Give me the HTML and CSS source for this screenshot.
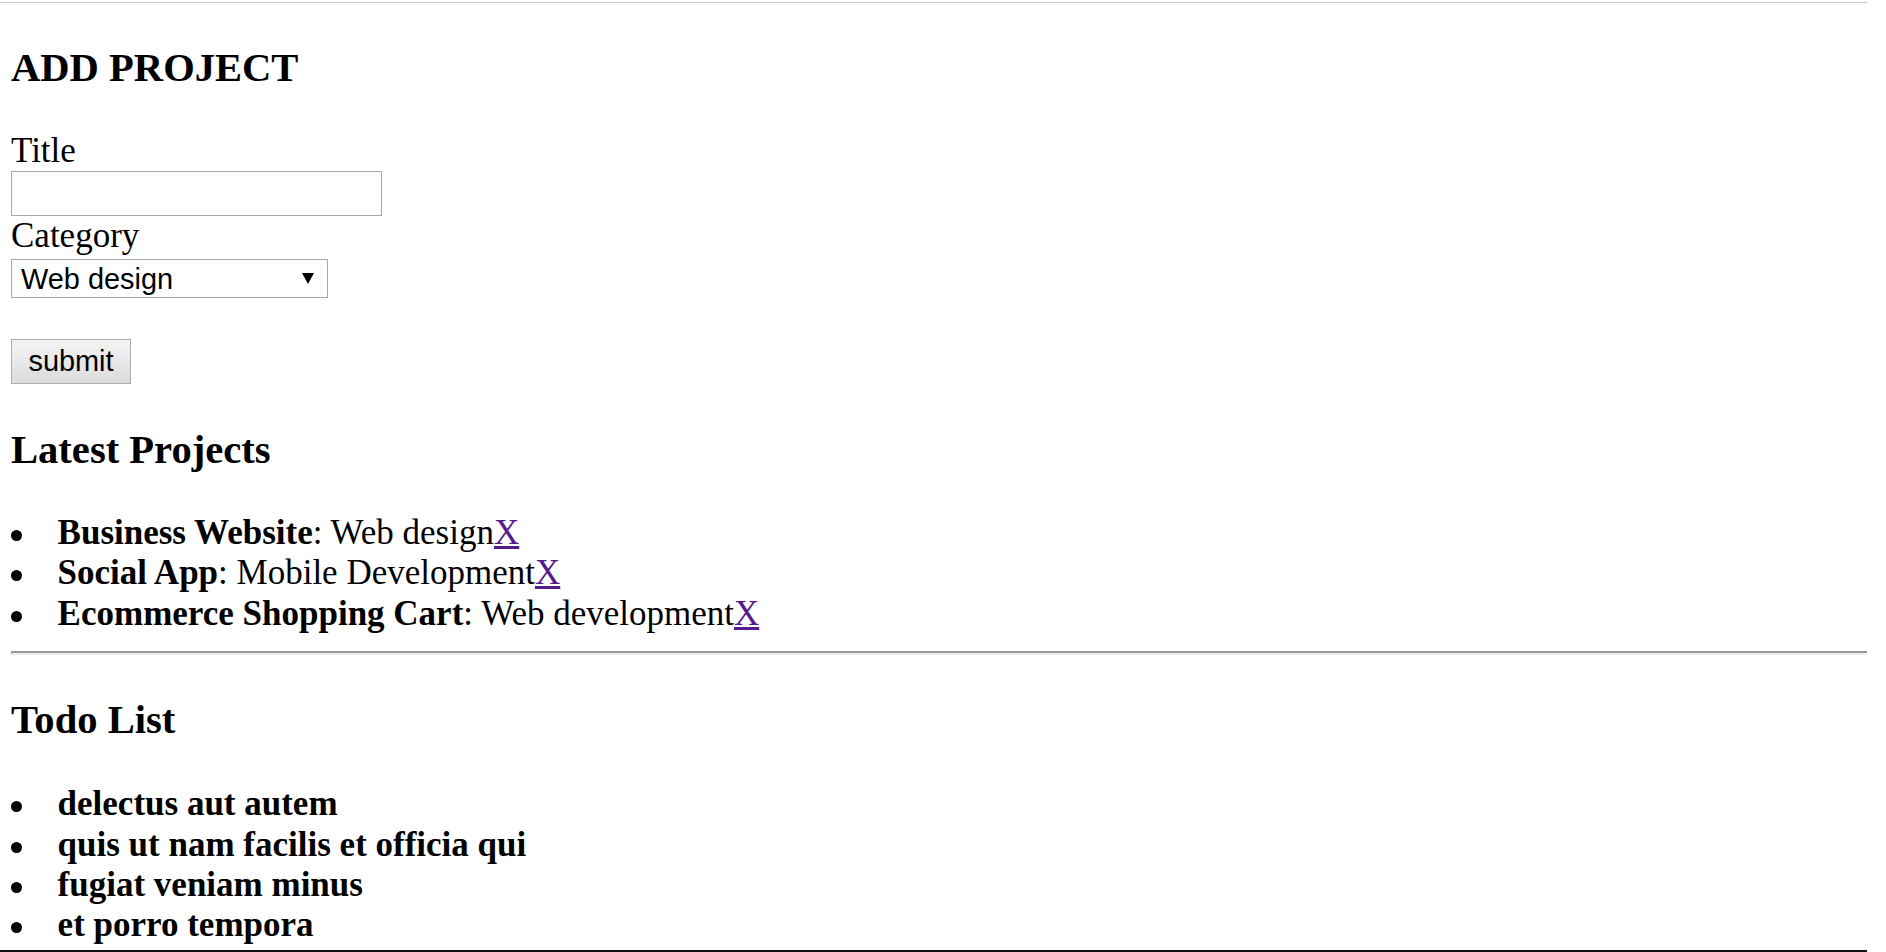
FILE: index.html
```html
<!DOCTYPE html>
<html lang="en">
<head>
    <meta charset="UTF-8">
    <meta name="viewport" content="width=device-width, initial-scale=1.0">
    <title>Project Manager</title>
    <link rel="stylesheet" href="styles.css">
</head>
<body>
    <div class="page">
        <div class="add-project">
            <h3>ADD PROJECT</h3>
            <form class="project-form" onsubmit="return false">
                <label class="form-label" for="title">Title</label>
                <input class="text-input" type="text" id="title">
                <label class="form-label" for="category">Category</label>
                <div class="select-wrap">
                    <select class="select-input" id="category">
                        <option>Web design</option>
                        <option>Web development</option>
                        <option>Mobile Development</option>
                    </select>
                </div>
                <input class="submit-btn" type="submit" value="submit">
            </form>
        </div>

        <div class="projects">
            <h3>Latest Projects</h3>
            <ul class="item-list">
                <li><strong>Business Website</strong>: Web design<a href="#">X</a></li>
                <li><strong>Social App</strong>: Mobile Development<a href="#">X</a></li>
                <li><strong>Ecommerce Shopping Cart</strong>: Web development<a href="#">X</a></li>
            </ul>
        </div>

        <hr class="divider">

        <div class="todos">
            <h3>Todo List</h3>
            <ul class="item-list todo-list">
                <li><strong>delectus aut autem</strong></li>
                <li><strong>quis ut nam facilis et officia qui</strong></li>
                <li><strong>fugiat veniam minus</strong></li>
                <li><strong>et porro tempora</strong></li>
            </ul>
        </div>

        <div class="bottom-rule"></div>
    </div>
</body>
</html>
```

FILE: styles.css
```css
html, body {
    margin: 0;
    padding: 0;
    background: #fff;
    overflow: hidden;
}
body {
    font-family: 'Liberation Serif', 'Times New Roman', serif;
    font-size: 35px;
    color: #000;
}
.page {
    display: flex;
    flex-direction: column;
    box-sizing: border-box;
    height: 950px;
    margin: 2px 19px 0 0;
    padding-left: 11px;
    border-top: 1px solid #c8c8c8;
}
h3 {
    font-size: 40.6px;
    font-weight: bold;
    margin: 0;
}
.add-project h3 {
    margin-top: 41px;
    margin-bottom: 40px;
}
.form-label {
    display: block;
    line-height: 40.3px;
}
.text-input {
    display: block;
    box-sizing: border-box;
    width: 371px;
    height: 45px;
    margin: 0;
    border: 1px solid #a9a9a9;
    padding: 0 4px;
    font-family: 'Liberation Sans', Arial, sans-serif;
    font-size: 28.9px;
    background: #fff;
}
.select-wrap {
    position: relative;
    width: 317px;
    margin-top: 2.5px;
}
.select-wrap::after {
    content: "";
    position: absolute;
    left: 291px;
    top: 14px;
    border-left: 6px solid transparent;
    border-right: 6px solid transparent;
    border-top: 11px solid #000;
    pointer-events: none;
}
.select-input {
    display: block;
    box-sizing: border-box;
    width: 317px;
    height: 39.4px;
    margin: 0;
    padding: 0 0 0 9px;
    border: 1px solid #a9a9a9;
    border-radius: 0;
    background: #fff;
    color: #000;
    font-family: 'Liberation Sans', Arial, sans-serif;
    font-size: 28.9px;
    -webkit-appearance: none;
    appearance: none;
}
.submit-btn {
    display: block;
    box-sizing: border-box;
    width: 120px;
    height: 45px;
    margin: 40.7px 0 0;
    padding: 0;
    border: 1px solid #adadad;
    border-radius: 0;
    background: linear-gradient(#f4f4f4, #dcdcdc);
    color: #000;
    font-family: 'Liberation Sans', Arial, sans-serif;
    font-size: 28.9px;
    -webkit-appearance: none;
    appearance: none;
}
.projects h3 {
    margin-top: 41.4px;
}
.item-list {
    list-style: none;
    margin: 40.6px 0 0;
    padding-left: 46.6px;
    line-height: 40.3px;
}
.item-list li::before {
    content: "";
    display: inline-block;
    width: 11px;
    height: 11px;
    border-radius: 50%;
    background: #000;
    margin-left: -46.4px;
    margin-right: 35.4px;
    vertical-align: 3px;
}
.item-list a {
    color: #551a8b;
    text-decoration: underline;
}
.divider {
    flex: none;
    height: 0;
    margin: 16.5px 0 0;
    border: 0;
    border-top: 2px solid #9a9a9a;
    border-bottom: 2px solid #eeeeee;
    border-left: 1px solid #9a9a9a;
}
.todos h3 {
    margin-top: 41px;
}
.todo-list {
    margin-top: 41.8px;
    margin-bottom: 0;
}
.bottom-rule {
    margin: auto 0 0 -11px;
    border-top: 2px solid #111;
}
```
